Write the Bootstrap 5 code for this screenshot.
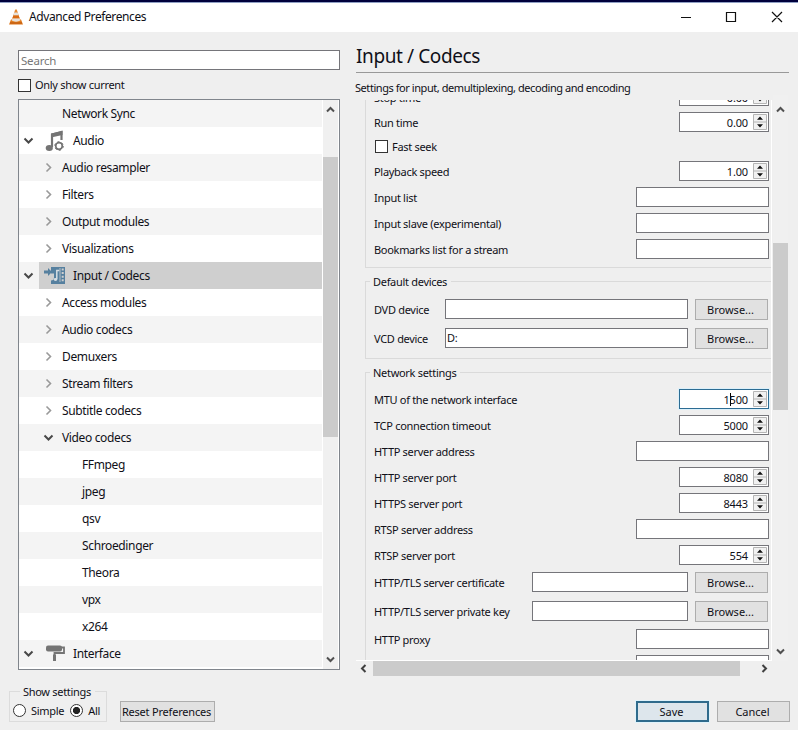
<!DOCTYPE html>
<html lang="en">
<head>
<meta charset="utf-8">
<title>Advanced Preferences</title>
<link rel="stylesheet" href="https://cdn.jsdelivr.net/npm/bootstrap@5.3.0/dist/css/bootstrap.min.css">
<style>
body{width:798px;height:730px;background:#efefef;color:#101018;font:11px/14px "Noto Sans","Open Sans",sans-serif;letter-spacing:-.3px}
svg{display:block;flex:none}
.titlebar{height:32px;border-top:2px solid #00003c;box-shadow:inset 0 1px #8f9fc4;padding-left:9px}
.titlebar .name{font-size:12px;letter-spacing:-.4px;margin-left:6px;width:647px}
.leftpane{width:322px;margin:18px 0 0 18px}
.rightpane{width:435px;margin:11px 0 0 16px}
.field{border:1px solid #75757a;border-radius:0;background:#fff;height:20px;min-height:0;padding:0 1px;font:inherit;letter-spacing:inherit;color:#101018}
.field::placeholder{color:#777}
.search{font-size:11.5px;letter-spacing:-.2px;padding-left:2px}
.tick{width:13px;height:13px;border:1px solid #333;background:#fff;flex:none}
.tree{height:571px;border:1px solid #80858c;background:#fff;margin-top:7px}
.treelist{width:303px;font-size:12px;letter-spacing:-.36px}
.node{height:27px;padding-left:4px}
.node:nth-child(odd){background:#f4f4f4}
.twist{width:11px;height:11px}
.node.sub{padding-left:24px}
.node.sub .twist{margin-right:8px}
.node.leaf{padding-left:63px}
.inner{height:27px;margin-left:5px;padding-left:5px;gap:7px;flex:1}
.picked .inner{background:#cfcfcf}
.vbar{width:15px;background:#f0f0f0}
.thumb{background:#cbcbcb}
.heading{font-size:19px;line-height:26px;letter-spacing:-.4px;height:30px;border-bottom:1px solid #999;width:433px}
.about{margin:8px 0 0 -1px;letter-spacing:-.44px}
.scroller{width:416px;height:561px;border-right:1px solid #fff;border-bottom:1px solid #fff;margin-top:5px}
.box{border:1px solid #dadada;border-right:0;margin-left:9px;padding:0 2px 5px 8px}
.box.first{margin-top:-17px;border-top:0}
.box.titled{margin-top:13px;padding-top:13px}
.caption{position:absolute;top:-7px;left:4px;background:#efefef;padding:0 4px 0 3px}
.line{height:26px}
.line.file{height:29px;padding-right:1px}
.line>span{padding-top:2px}
.line.file>span{padding-top:1px}
.line.file .field{margin-right:7px;margin-bottom:2px}
.wide{width:133px}
.spin{width:90px;height:20px;border:1px solid #75757a;background:#fff;padding:0 1px 0 0}
.spin span{margin-right:5px;padding-top:2px;letter-spacing:-.15px}
.spin.active{border-color:#2c6c93;box-shadow:0 0 0 1px #dcf0fa}
.caret{width:1px;height:13px;background:#000;margin:0 -1px 0 0;display:inline-block;vertical-align:-2px}
.push{border:1px solid #adadad;border-radius:0;background:#e1e1e1;width:73px;height:21px;padding:1px 2px 0 0;font:inherit;letter-spacing:0;line-height:18px;color:#101018;white-space:nowrap}
.push.reset{width:95px;letter-spacing:-.2px}
.push.main{border:2px solid #2f6b8c;background:#dde6ec;box-shadow:0 0 0 1px #dff3fb;line-height:16px}
.radio{width:13px;height:13px;border:1px solid #333;border-radius:50%;background:#fff;flex:none}
.radio.on{background:radial-gradient(circle,#222 0 3.2px,#fff 4px)}
.modes{width:98px;height:31px;border:1px solid #dcdcdc;padding:8px 0 0 3px}
</style>
<script src="https://cdn.jsdelivr.net/npm/bootstrap@5.3.0/dist/js/bootstrap.bundle.min.js"></script>
</head>
<body class="overflow-hidden m-0">
<svg width="0" height="0" class="position-absolute">
<symbol id="down" viewBox="0 0 11 11"><path d="M1.5 3.5 5.5 7.5 9.500 3.500" fill="none" stroke="#484848" stroke-width="2"/></symbol>
<symbol id="right" viewBox="0 0 11 11"><path d="M3.500 1.500 7.500 5.500 3.500 9.500" fill="none" stroke="#999" stroke-width="1.600"/></symbol>
<symbol id="steps" viewBox="0 0 14 16"><path d="M.5.500h13v15H.5zM.5 8h13" fill="#f1f1f1" stroke="#b5b5b5"/><path d="M4 5.700 7 2.500 10 5.700zM4 10.300 7 13.500 10 10.300z" fill="#111"/></symbol>
</svg>

<header class="titlebar bg-white d-flex align-items-center">
  <svg width="14" height="16" viewBox="0 0 14 16"><path d="M2 10.500h10l2 5H0z" fill="#e0791d"/><path d="M6.200.5h1.600L11.500 12q-4.500 2.500-9 0z" fill="#e58a33"/><path d="M5.300 3.500h3.400l1 3.100H4.300zM3.500 9.300h7l.8 2.300q-4.300 2.300-8.600 0z" fill="#e6e1da"/><path d="M4.300 6.600h5.400l.8 2.700h-7z" fill="#d96a12"/><path d="M1 14h12" stroke="#b9560e"/></svg>
  <span class="name">Advanced Preferences</span>
  <svg width="110" height="14" viewBox="0 0 110 14"><path d="M5 7.500h10M50.500 2.500h9v9h-9zM96 2l10 10M106 2 96 12" fill="none" stroke="#111" stroke-width="1.200"/></svg>
</header>

<main class="d-flex">
  <section class="leftpane">
    <input class="form-control field search" placeholder="Search">
    <label class="d-flex align-items-center gap-1 mt-2"><i class="tick"></i><span>Only show current</span></label>
    <div class="tree d-flex">
      <div class="treelist">
        <div class="node leaf d-flex align-items-center" style="padding-left:43px">Network Sync</div>
        <div class="node d-flex align-items-center"><svg class="twist"><use href="#down"/></svg><div class="inner d-flex align-items-center"><svg width="22" height="22" viewBox="0 0 22 22"><path d="M8 17V4.500L17.500 2v8" fill="none" stroke="#747474" stroke-width="2.200"/><path d="M7 3.500 18.500 1v4L7 7.500z" fill="#747474"/><ellipse cx="5.300" cy="18" rx="3.600" ry="3" fill="#747474"/><circle cx="15" cy="16" r="3.300" fill="none" stroke="#747474" stroke-width="1.700"/><circle cx="15" cy="16" r="4.300" fill="none" stroke="#747474" stroke-width="1" stroke-dasharray="2.250 2.250"/></svg>Audio</div></div>
        <div class="node sub d-flex align-items-center"><svg class="twist"><use href="#right"/></svg>Audio resampler</div>
        <div class="node sub d-flex align-items-center"><svg class="twist"><use href="#right"/></svg>Filters</div>
        <div class="node sub d-flex align-items-center"><svg class="twist"><use href="#right"/></svg>Output modules</div>
        <div class="node sub d-flex align-items-center"><svg class="twist"><use href="#right"/></svg>Visualizations</div>
        <div class="node picked d-flex align-items-center"><svg class="twist"><use href="#down"/></svg><div class="inner d-flex align-items-center"><svg width="22" height="22" viewBox="0 0 22 22"><path d="M7 2h8v17H7v-3.500q3 0 3-3V8.500H7z" fill="#56809f"/><path d="M15 2h6v17h-9l3-3z" fill="#56809f"/><path d="M18.700 3.500v14" stroke="#cfcfcf" stroke-width="2" stroke-dasharray="2 1.600"/><path d="M16 3v14" stroke="#cfcfcf" stroke-width=".8"/><path d="M12.800 14V5.500h2.500" fill="none" stroke="#d6dde2" stroke-width="1.500"/><ellipse cx="11.500" cy="14.500" rx="1.800" ry="1.400" fill="#d6dde2"/><path d="M0 5.500h4V3l4 4-4 4V8.500H0z" fill="#56809f"/></svg>Input / Codecs</div></div>
        <div class="node sub d-flex align-items-center"><svg class="twist"><use href="#right"/></svg>Access modules</div>
        <div class="node sub d-flex align-items-center"><svg class="twist"><use href="#right"/></svg>Audio codecs</div>
        <div class="node sub d-flex align-items-center"><svg class="twist"><use href="#right"/></svg>Demuxers</div>
        <div class="node sub d-flex align-items-center"><svg class="twist"><use href="#right"/></svg>Stream filters</div>
        <div class="node sub d-flex align-items-center"><svg class="twist"><use href="#right"/></svg>Subtitle codecs</div>
        <div class="node sub d-flex align-items-center"><svg class="twist"><use href="#down"/></svg>Video codecs</div>
        <div class="node leaf d-flex align-items-center">FFmpeg</div>
        <div class="node leaf d-flex align-items-center">jpeg</div>
        <div class="node leaf d-flex align-items-center">qsv</div>
        <div class="node leaf d-flex align-items-center">Schroedinger</div>
        <div class="node leaf d-flex align-items-center">Theora</div>
        <div class="node leaf d-flex align-items-center">vpx</div>
        <div class="node leaf d-flex align-items-center">x264</div>
        <div class="node d-flex align-items-center"><svg class="twist"><use href="#down"/></svg><div class="inner d-flex align-items-center"><svg width="22" height="22" viewBox="0 0 22 22"><rect x="2" y="2.500" width="16" height="6" rx="2" fill="#747474"/><path d="M17 4.500h3v5.500h-9.500v7.500" fill="none" stroke="#747474" stroke-width="1.800"/><path d="M10.500 11.500v6.500" stroke="#747474" stroke-width="3"/></svg>Interface</div></div>
      </div>
      <div class="vbar ms-auto me-auto d-flex flex-column align-items-center">
        <svg width="11" height="11" viewBox="0 0 11 11" class="mt-1"><path d="M2 7.500 5.500 4 9 7.500" fill="none" stroke="#505050" stroke-width="2"/></svg>
        <div class="thumb w-100" style="height:280px;margin-top:42px"></div>
        <svg width="11" height="11" viewBox="0 0 11 11" class="mt-auto mb-1"><path d="M2 3.500 5.500 7 9 3.500" fill="none" stroke="#505050" stroke-width="2"/></svg>
      </div>
    </div>
  </section>

  <section class="rightpane">
    <h1 class="heading fw-normal m-0">Input / Codecs</h1>
    <div class="about">Settings for input, demultiplexing, decoding and encoding</div>
    <div class="d-flex">
      <div class="scroller overflow-hidden">
        <div class="box first">
          <div class="line d-flex align-items-center justify-content-between"><span class="pt-1">Stop time</span><div class="spin d-flex align-items-center justify-content-end"><span class="pt-1">0.00</span><svg width="14" height="16"><use href="#steps"/></svg></div></div>
          <div class="line d-flex align-items-center justify-content-between"><span>Run time</span><div class="spin d-flex align-items-center justify-content-end"><span>0.00</span><svg width="14" height="16"><use href="#steps"/></svg></div></div>
          <label class="line d-flex align-items-center" style="height:23px;padding-left:1px"><i class="tick"></i><span class="ms-1 pt-0">Fast seek</span></label>
          <div class="line d-flex align-items-center justify-content-between"><span>Playback speed</span><div class="spin d-flex align-items-center justify-content-end"><span>1.00</span><svg width="14" height="16"><use href="#steps"/></svg></div></div>
          <div class="line d-flex align-items-center justify-content-between"><span>Input list</span><input class="form-control field wide"></div>
          <div class="line d-flex align-items-center justify-content-between"><span>Input slave (experimental)</span><input class="form-control field wide"></div>
          <div class="line d-flex align-items-center justify-content-between"><span>Bookmarks list for a stream</span><input class="form-control field wide"></div>
        </div>
        <div class="box titled position-relative">
          <div class="caption">Default devices</div>
          <div class="line file d-flex align-items-center"><span>DVD device</span><input class="form-control field ms-auto" style="width:243px"><button class="btn push">Browse...</button></div>
          <div class="line file d-flex align-items-center"><span>VCD device</span><input class="form-control field ms-auto" style="width:243px" value="D:"><button class="btn push">Browse...</button></div>
        </div>
        <div class="box titled position-relative">
          <div class="caption">Network settings</div>
          <div class="line d-flex align-items-center justify-content-between"><span>MTU of the network interface</span><div class="spin active d-flex align-items-center justify-content-end"><span>1<i class="caret"></i>500</span><svg width="14" height="16"><use href="#steps"/></svg></div></div>
          <div class="line d-flex align-items-center justify-content-between"><span>TCP connection timeout</span><div class="spin d-flex align-items-center justify-content-end"><span>5000</span><svg width="14" height="16"><use href="#steps"/></svg></div></div>
          <div class="line d-flex align-items-center justify-content-between"><span>HTTP server address</span><input class="form-control field wide"></div>
          <div class="line d-flex align-items-center justify-content-between"><span>HTTP server port</span><div class="spin d-flex align-items-center justify-content-end"><span>8080</span><svg width="14" height="16"><use href="#steps"/></svg></div></div>
          <div class="line d-flex align-items-center justify-content-between"><span>HTTPS server port</span><div class="spin d-flex align-items-center justify-content-end"><span>8443</span><svg width="14" height="16"><use href="#steps"/></svg></div></div>
          <div class="line d-flex align-items-center justify-content-between"><span>RTSP server address</span><input class="form-control field wide"></div>
          <div class="line d-flex align-items-center justify-content-between"><span>RTSP server port</span><div class="spin d-flex align-items-center justify-content-end"><span>554</span><svg width="14" height="16"><use href="#steps"/></svg></div></div>
          <div class="line file d-flex align-items-center"><span>HTTP/TLS server certificate</span><input class="form-control field ms-auto" style="width:156px"><button class="btn push">Browse...</button></div>
          <div class="line file d-flex align-items-center"><span>HTTP/TLS server private key</span><input class="form-control field ms-auto" style="width:156px"><button class="btn push">Browse...</button></div>
          <div class="line d-flex align-items-center justify-content-between"><span>HTTP proxy</span><input class="form-control field wide"></div>
          <div class="line d-flex align-items-center justify-content-end"><input class="form-control field wide"></div>
        </div>
      </div>
      <div class="vbar d-flex flex-column align-items-center" style="margin-left:1px;padding-top:9px">
        <svg width="11" height="11" viewBox="0 0 11 11"><path d="M2 7.500 5.500 4 9 7.500" fill="none" stroke="#505050" stroke-width="2"/></svg>
        <div class="thumb w-100" style="height:167px;margin-top:128px"></div>
        <svg width="11" height="11" viewBox="0 0 11 11" class="mt-auto mb-1"><path d="M2 3.500 5.500 7 9 3.500" fill="none" stroke="#505050" stroke-width="2"/></svg>
      </div>
    </div>
    <div class="d-flex align-items-center" style="height:15px;padding-left:2px">
      <svg width="11" height="11" viewBox="0 0 11 11"><path d="M7.500 2 4 5.500 7.500 9" fill="none" stroke="#404040" stroke-width="2"/></svg>
      <div class="thumb h-100" style="width:367px;margin:0 19px 0 4px"></div>
      <svg width="11" height="11" viewBox="0 0 11 11"><path d="M3.500 2 7 5.500 3.500 9" fill="none" stroke="#404040" stroke-width="2"/></svg>
    </div>
  </section>
</main>

<footer class="d-flex align-items-start" style="padding:15px 8px 0 9px">
  <div class="modes position-relative d-flex align-items-center">
    <div class="caption" style="left:10px">Show settings</div>
    <i class="radio"></i><span style="margin:0 6px 0 5px">Simple</span>
    <i class="radio on"></i><span style="margin-left:5px">All</span>
  </div>
  <button class="btn push reset" style="margin:10px 0 0 13px">Reset Preferences</button>
  <button class="btn push main ms-auto" style="margin-top:10px">Save</button>
  <button class="btn push" style="margin:10px 0 0 8px">Cancel</button>
</footer>
</body>
</html>
